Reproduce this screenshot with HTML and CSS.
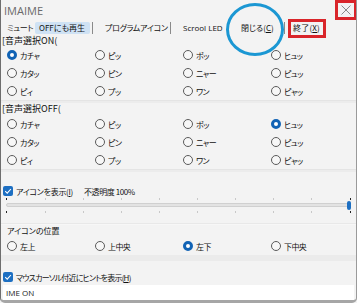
FILE: index.html
```html
<!DOCTYPE html>
<html lang="ja">
<head>
<meta charset="utf-8">
<title>IMAIME</title>
<link rel="stylesheet" href="styles.css">
</head>
<body>
<div class="win">
  <div class="titlebar">
    <span class="title">IMAIME</span>
    <div class="close"><svg width="10" height="10" viewBox="0 0 10 10"><path d="M0.5 0.5 L9.5 9.5 M9.5 0.5 L0.5 9.5" stroke="#8a8a8a" stroke-width="1" fill="none"/></svg></div>
  </div>
  <div class="toolbar">
    <span class="tb t-mute">ミュート</span>
    <span class="tb t-off">OFFにも再生</span>
    <span class="sep s1"></span>
    <span class="tb t-prog">プログラムアイコン</span>
    <span class="sep s2"></span>
    <span class="tb t-led">Scrool LED</span>
    <span class="tb t-close">閉じる(<u>C</u>)</span>
    <span class="sep s3"></span>
    <span class="tb t-exit">終了(<u>X</u>)</span>
  </div>

  <div class="group">
    <div class="glabel">[音声選択ON(</div>
    <div class="radios">
      <span class="radio on"><i></i>カチャ</span>
      <span class="radio"><i></i>ピッ</span>
      <span class="radio"><i></i>ポッ</span>
      <span class="radio"><i></i>ヒュッ</span>
      <span class="radio"><i></i>カタッ</span>
      <span class="radio"><i></i>ピン</span>
      <span class="radio"><i></i>ニャー</span>
      <span class="radio"><i></i>ピュッ</span>
      <span class="radio"><i></i>ピィ</span>
      <span class="radio"><i></i>プッ</span>
      <span class="radio"><i></i>ワン</span>
      <span class="radio"><i></i>ピャッ</span>
    </div>
  </div>
  <div class="divider"></div>
  <div class="group">
    <div class="glabel second">[音声選択OFF(</div>
    <div class="radios">
      <span class="radio"><i></i>カチャ</span>
      <span class="radio"><i></i>ピッ</span>
      <span class="radio"><i></i>ポッ</span>
      <span class="radio on"><i></i>ヒュッ</span>
      <span class="radio"><i></i>カタッ</span>
      <span class="radio"><i></i>ピン</span>
      <span class="radio"><i></i>ニャー</span>
      <span class="radio"><i></i>ピュッ</span>
      <span class="radio"><i></i>ピィ</span>
      <span class="radio"><i></i>プッ</span>
      <span class="radio"><i></i>ワン</span>
      <span class="radio"><i></i>ピャッ</span>
    </div>
  </div>
  <div class="divider"></div>

  <div class="check-row first">
    <span class="check"><svg width="10" height="10" viewBox="0 0 10 10"><path d="M2.2 5.2 L4.2 7.1 L7.9 3" stroke="#fff" stroke-width="1.1" fill="none"/></svg></span>
    <span>アイコンを表示(<u>I</u>)</span>
    <span class="opacity">不透明度 100%</span>
  </div>
  <div class="slider">
    <svg width="357" height="15" viewBox="0 0 357 15">
      <g stroke="#c8c8c8" stroke-width="1">
        <path d="M45.5 0 v2 M83.5 0 v2 M121.5 0 v2 M159.5 0 v2 M197.5 0 v2 M235.5 0 v2 M273.5 0 v2 M311.5 0 v2"/>
        <path d="M45.5 13 v2 M83.5 13 v2 M121.5 13 v2 M159.5 13 v2 M197.5 13 v2 M235.5 13 v2 M273.5 13 v2 M311.5 13 v2"/>
      </g>
      <path d="M6.5 0 v2 M6.5 13 v2 M350.5 0 v2 M350.5 13 v2" stroke="#222" stroke-width="1"/>
      <rect x="6.5" y="5.5" width="344" height="3" rx="1.5" fill="#e3e3e3" stroke="#d0d0d0"/>
      <rect x="347" y="3" width="4" height="9" rx="2" fill="#1d6fc2"/>
    </svg>
  </div>
  <div class="divider wide"></div>

  <div class="group">
    <div class="glabel pos">アイコンの位置</div>
    <div class="radios one">
      <span class="radio"><i></i>左上</span>
      <span class="radio"><i></i>上中央</span>
      <span class="radio on"><i></i>左下</span>
      <span class="radio"><i></i>下中央</span>
    </div>
  </div>
  <div class="divider band"></div>

  <div class="check-row second">
    <span class="check"><svg width="10" height="10" viewBox="0 0 10 10"><path d="M2.2 5.2 L4.2 7.1 L7.9 3" stroke="#fff" stroke-width="1.1" fill="none"/></svg></span>
    <span class="hint">マウスカーソル付近にヒントを表示(<u>H</u>)</span>
  </div>
  <div class="status">IME ON</div>

  <div class="ellipse"></div>
</div>
</body>
</html>
```

FILE: styles.css
```css
html, body {
  margin: 0;
  padding: 0;
}
body {
  background: #f3f3f3;
  font-family: "Noto Sans CJK JP", "Noto Sans", sans-serif;
  font-size: 8px;
  color: #111111;
  font-feature-settings: "palt";
}
.win {
  position: relative;
  width: 357px;
  height: 303px;
  box-sizing: border-box;
  overflow: hidden;
  background: #f3f3f3;
  border-left: 1px solid #6e6e6e;
  border-right: 1px solid #9a9a9a;
  border-bottom: 3px solid #a6a6a6;
  border-radius: 0 0 5px 5px;
  display: flex;
  flex-direction: column;
}
.titlebar {
  height: 20px;
  display: flex;
  align-items: center;
  justify-content: space-between;
  flex: none;
}
.title {
  font-family: "Open Sans", "Noto Sans", sans-serif;
  font-size: 11px;
  color: #6a6a6a;
  padding-left: 3px;
  padding-top: 1px;
}
.close {
  width: 22px;
  height: 20px;
  box-sizing: border-box;
  border: 3px solid #d9252a;
  margin-right: -1px;
  display: flex;
  align-items: center;
  justify-content: center;
}
.toolbar {
  height: 16px;
  display: flex;
  align-items: center;
  padding-left: 6px;
  flex: none;
  letter-spacing: -0.3px;
}
.tb {
  display: block;
  white-space: nowrap;
  line-height: 12px;
  box-sizing: border-box;
}
.t-mute { width: 28px; }
.t-off {
  width: 55px;
  height: 12px;
  background: #cfe2f4;
  border-radius: 2px;
  padding-left: 4px;
  letter-spacing: 0;
}
.sep {
  display: block;
  width: 1px;
  height: 12px;
  background: #8a8a8a;
}
.s1 { margin-left: 2px; }
.t-prog { margin-left: 12px; width: 62px; }
.s2 { margin-left: 3px; }
.t-led {
  margin-left: 12px;
  width: 44px;
  font-family: "Open Sans", "Noto Sans", sans-serif;
  letter-spacing: 0;
}
.t-close { margin-left: 14px; width: 42px; letter-spacing: 0; }
.s3 { margin-left: 1px; }
.t-exit {
  margin-left: 6px;
  width: 32px;
  height: 13px;
  padding-left: 2px;
  letter-spacing: 0.2px;
  outline: 3px solid #d9252a;
}
.group {
  flex: none;
}
.glabel {
  height: 10px;
  line-height: 10px;
  padding-left: 1px;
  font-size: 9px;
}
.glabel.second {
  height: 12px;
  line-height: 12px;
}
.radios {
  display: grid;
  grid-template-columns: repeat(4, 88px);
  grid-auto-rows: 18px;
  padding-left: 6px;
}
.radio {
  display: flex;
  align-items: center;
  gap: 3px;
  white-space: nowrap;
  letter-spacing: -0.6px;
}
.radio i {
  display: block;
  width: 10px;
  height: 10px;
  box-sizing: border-box;
  border-radius: 50%;
  border: 1px solid #5a5a5a;
  background: #f7f7f7;
}
.radio.on i {
  border: 3px solid #1163b5;
  background: #ffffff;
}
.divider {
  flex: none;
  height: 3px;
  border-top: 1px solid #e4e4e4;
  background: #ececec;
  box-sizing: border-box;
}
.check-row {
  flex: none;
  display: flex;
  align-items: center;
  gap: 3px;
  padding-left: 2px;
  height: 14px;
  white-space: nowrap;
  letter-spacing: -0.3px;
}
.check-row.first {
  margin-top: 12px;
}
.check {
  display: block;
  width: 10px;
  height: 10px;
  border-radius: 2px;
  background: #1d6fc2;
}
.check svg {
  display: block;
}
.opacity {
  margin-left: 8px;
  letter-spacing: -0.4px;
}
.hint {
  letter-spacing: -0.8px;
}
.slider {
  flex: none;
  height: 15px;
  margin-left: -1px;
}
.slider svg {
  display: block;
}
.divider.wide {
  margin-top: 10px;
  height: 2px;
  border-top: 1px solid #e8e8e8;
  background: #f7f7f7;
}
.glabel.pos {
  height: 12px;
  line-height: 12px;
  padding-left: 6px;
  font-size: 8px;
}
.radios.one {
  grid-auto-rows: 18px;
}
.divider.band {
  height: 6px;
  border-top: 0;
  background: #ebebeb;
}
.check-row.second {
  margin-top: 9px;
}
.status {
  flex: none;
  height: 15px;
  line-height: 15px;
  margin: 1px 2px 0 2px;
  background: #ffffff;
  padding-left: 3px;
  font-family: "Open Sans", "Noto Sans", sans-serif;
  font-size: 8px;
  color: #222;
}
.ellipse {
  position: absolute;
  left: 225px;
  top: 3px;
  width: 58px;
  height: 53px;
  box-sizing: border-box;
  border: 3px solid #1b97d3;
  border-radius: 50%;
}
```
